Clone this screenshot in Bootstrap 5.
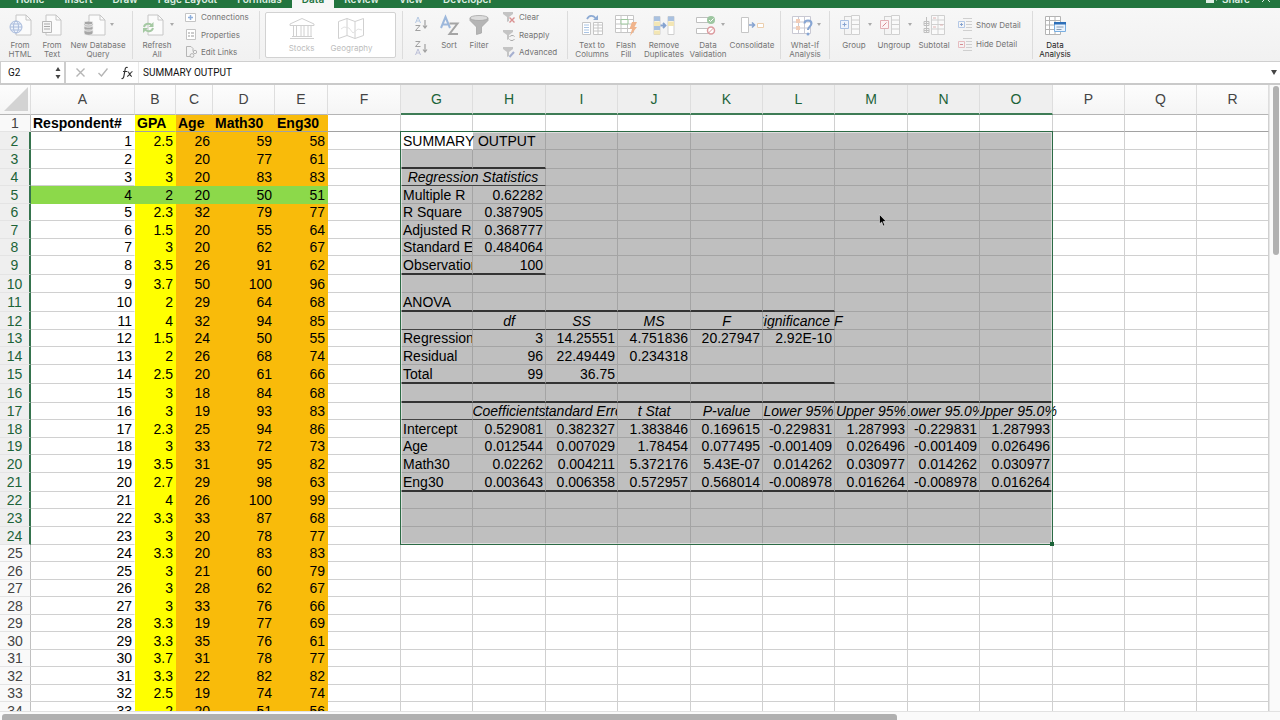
<!DOCTYPE html>
<html lang="en">
<head>
<meta charset="utf-8">
<meta name="viewport" content="width=device-width, initial-scale=1">
<title>Regression workbook</title>
<link href="https://cdn.jsdelivr.net/npm/bootstrap@5.3.0/dist/css/bootstrap.min.css" rel="stylesheet">
<style>
:root { --xl-green: #23753f; --xl-line: #d0d0d0; --xl-sel: #bfbfbf; }
body { font-family: Inter, "Liberation Sans", sans-serif; color: #000; background: #fff; }

/* tab strip, scrolled almost out of view */
.tabstrip { height: 8px; background: var(--xl-green); overflow: hidden; padding-left: 6px; }
.tabstrip .nav-link { font-size: 10px; line-height: 12px; font-weight: 600; color: #dfeee4; padding: 0 10px 3px; }
.tabstrip .nav-link.active { background: #f6f6f6; color: var(--xl-green); }
.tabstrip svg { display: block; }

/* ribbon */
.ribbon { height: 54px; background: linear-gradient(#f7f7f7, #f1f1f1); border-bottom: 1px solid #cfcfcf; padding-left: 4px; overflow: hidden; }
.ribbon .rule { width: 1px; height: 48px; margin: 3px 4px 0; background: #dcdcdc; flex: none; }
.tool { border: 0; background: none; padding: 6px 0 0; flex: none; color: #747474; font-size: 8px; line-height: 9px; display: flex; flex-direction: column; align-items: center; white-space: nowrap; }
.tool svg { flex: none; height: 24px; margin-bottom: 3px; overflow: visible; }
.tool.on { color: #222; }
.w-28 { width: 28px; } .w-32 { width: 32px; } .w-36 { width: 36px; } .w-40 { width: 40px; } .w-48 { width: 48px; } .w-60 { width: 60px; }
.rowtool { border: 0; background: none; padding: 0; height: 12px; display: flex; align-items: center; gap: 4px; color: #747474; font-size: 8px; line-height: 12px; white-space: nowrap; }
.stack { flex: none; padding: 3px 0 3px 8px; display: flex; flex-direction: column; justify-content: space-between; }
.stack.two { justify-content: space-evenly; padding-left: 4px; }
.stack-a { width: 78px; } .stack-b { width: 68px; } .stack-c { width: 74px; }
.gallery { width: 131px; height: 46px; margin: 4px 2px 0 1px; background: #fff; border: 1px solid #d2d2d2; border-radius: 2px; flex: none; gap: 16px; }
.gallery .tool { color: #bdbdbd; padding-top: 4px; }

/* formula bar */
.formula { height: 23px; background: #fff; border-bottom: 2px solid #cacaca; }
.namebox { width: 66px; border: 1px solid #cdcdcd; border-width: 0 2px 0 1px; }
.namebox input, .formula .entry { border: 0; outline: 0; background: none; padding: 0; font-family: Roboto, sans-serif; font-size: 10px; line-height: 14px; color: #111; min-width: 0; }
.namebox input { width: 45px; margin-left: 7px; }
.formula button { border: 0; background: none; padding: 0; display: flex; }
.fxbar { gap: 13px; padding: 0 5px 0 10px; }
.entrybox { border-left: 1px solid #e9e9e9; padding: 0 3px 0 4px; }

/* sheet */
.sheet { position: relative; overflow: hidden; min-width: 0; }
.sheetgrid { table-layout: fixed; width: 100%; border-collapse: separate; border-spacing: 0; font-family: "Liberation Sans", Arial, sans-serif; font-size: 14px; line-height: 16px; }
.sheetgrid th, .sheetgrid td { padding: 0 2px; border: 0 solid var(--xl-line); border-width: 0 1px 1px 0; vertical-align: middle; white-space: nowrap; overflow: hidden; }
.sheetgrid thead th { height: 30px; font-weight: 400; text-align: center; color: #444; background: linear-gradient(#fdfdfd, #f5f5f5); border-bottom-color: #b5b5b5; border-right-color: #dedede; padding: 0 0 1px; }
.sheetgrid thead th.insel { background: #efefef; color: #1c6338; border-bottom: 2px solid #3e7c56; padding: 0; }
.sheetgrid tbody th { font-weight: 400; text-align: center; color: #444; background: #f9f9f9; border-right-color: #c0c0c0; border-bottom-color: #e4e4e4; padding: 0; }
.sheetgrid tbody th.insel { background: #efefef; color: #1c6338; border-right: 2px solid #35734d; border-bottom-color: #e4e4e4; }
.h17 > * { height: 17px; } .h18 > * { height: 18px; } .h19 > * { height: 19px; }
.sheetgrid .num { text-align: right; }
.sheetgrid .mid { text-align: center; font-style: italic; padding: 0; }
.sheetgrid tr.head > td { font-weight: 700; border-bottom-color: #a2a2a2; }
.sheetgrid td.edge { border-right-color: transparent; }
.sheetgrid td.yel { background: #ffff00; border-color: #ffff00; }
.sheetgrid td.org { background: #f9bb0a; border-color: #f9bb0a; }
.sheetgrid td.grn { background: #8cd94a; border-color: #8cd94a; }
.sheetgrid td.sel { background: var(--xl-sel); border-color: #a4a4a4; }
.sheetgrid td.cur { background: #fff; border-right-color: #fff; }
.sheetgrid td.spill { overflow: visible; }
.sheetgrid td.thick { border-bottom: 2px solid #333; }
.sheetgrid td.thin { border-bottom: 1px solid #444; }
.fit { display: flex; justify-content: center; clip-path: inset(0); }
.fit-right { clip-path: inset(0 -16px 0 0); }
.range-box { position: absolute; border: 1px solid #2c6b45; box-shadow: inset 0 0 0 1px #ffffff80; pointer-events: none; }
.range-box i { position: absolute; right: -2px; bottom: -2px; width: 4px; height: 4px; background: #1c6338; }
.pointer { position: absolute; left: 879px; top: 129px; }

.vtrack { width: 11px; background: #fafafa; border-left: 1px solid #e6e6e6; padding: 1px 1px 0 3px; }
.vthumb { width: 6px; height: 27%; border-radius: 3px; background: #b1b1b1; }
.htrack { height: 9px; background: #fafafa; border-top: 1px solid #e2e2e2; padding: 2px 0 0 2px; }
.hthumb { width: 70%; height: 6px; border-radius: 3px 3px 0 0; background: #b0b0b0; }
</style>
</head>
<body class="vh-100 d-flex flex-column overflow-hidden">

<nav class="tabstrip d-flex align-items-end flex-shrink-0" aria-label="Ribbon tabs">
  <a class="nav-link" href="#">Home</a>
  <a class="nav-link" href="#">Insert</a>
  <a class="nav-link" href="#">Draw</a>
  <a class="nav-link" href="#">Page Layout</a>
  <a class="nav-link" href="#">Formulas</a>
  <a class="nav-link active" href="#">Data</a>
  <a class="nav-link" href="#">Review</a>
  <a class="nav-link" href="#">View</a>
  <a class="nav-link" href="#">Developer</a>
  <a class="nav-link ms-auto d-flex align-items-end gap-1" href="#"><svg width="12" height="8" viewBox="0 0 12 8" fill="#dfeee4"><path d="M0 6V3q0-2 4-2t4 2v3zM9 1h3L10.500 4z"/></svg>Share</a>
  <svg class="me-2 flex-shrink-0" width="12" height="8" viewBox="0 0 12 8" fill="none" stroke="#dfeee4"><path d="M2 2l4-4 4 4"/></svg>
</nav>

<div class="ribbon d-flex flex-shrink-0" role="toolbar" aria-label="Data">
  <button class="tool w-32"><svg width="24" viewBox="0 0 24 24" fill="none" stroke="#c6c6c6"><path d="M8 1h10l5 5v15H8z" fill="#fbfbfb"/><path d="M18 1v5h5"/><g stroke="#a9bbdc"><circle cx="8" cy="13" r="6" fill="#eef3fb"/><ellipse cx="8" cy="13" rx="2.500" ry="6"/><path d="M2 13h12M3 10h10M3 16h10"/></g></svg>From<br>HTML</button>
  <button class="tool w-32"><svg width="24" viewBox="0 0 24 24" fill="none" stroke="#c6c6c6"><path d="M6 1h10l5 5v15H6z" fill="#fbfbfb"/><path d="M16 1v5h5"/><path d="M2.500 7.500h9v11h-9z" fill="#f6f6f6" stroke="#b9b9b9"/><path d="M4 10h6M4 12.500h6M4 15h6" stroke="#a9a9a9"/></svg>From<br>Text</button>
  <button class="tool w-60"><svg width="48" viewBox="0 0 48 24" fill="none" stroke="#c6c6c6"><path d="M15 1h11l5 5v15H15z" fill="#fbfbfb"/><path d="M26 1v5h5"/><g stroke="#f0f0f0" stroke-width=".8" fill="#a6a6a6"><path d="M10 16v3c0 3 9 3 9 0v-3zM10 12v3c0 3 9 3 9 0v-3zM10 9v2c0 3 9 3 9 0V9z"/><ellipse cx="14.500" cy="9" rx="4.500" ry="1.900"/></g><path d="M36 9h4l-2 3z" fill="#aaa" stroke="none"/></svg>New Database<br>Query</button>
  <div class="rule"></div>
  <button class="tool w-40"><svg width="32" viewBox="0 0 32 24" fill="none" stroke="#c6c6c6"><path d="M7 1h10l5 5v15H7z" fill="#fbfbfb"/><path d="M17 1v5h5"/><g stroke="#a5c9a3" stroke-width="2"><path d="M3 13c1-4 6-4 8-1.500M12 14c-1 4-6 4-8 1.500"/></g><path d="M12.500 8v5h-5zM2 19v-5h5z" fill="#a5c9a3" stroke="none"/><path d="M29 9h4l-2 3z" fill="#aaa" stroke="none"/></svg>Refresh<br>All</button>
  <div class="stack stack-a">
    <button class="rowtool"><svg width="12" height="11" viewBox="0 0 12 11" fill="none" stroke="#c4c4c4"><path d="M.5 1.500h10v8H.5z" fill="#fff"/><path d="M5.500 3v5M3 5.500h5" stroke="#8fb0dc" stroke-width="1.500"/></svg>Connections</button>
    <button class="rowtool"><svg width="12" height="11" viewBox="0 0 12 11" fill="none" stroke="#c4c4c4"><path d="M1.500.5h9v10h-9z" fill="#fff"/><path d="M3 4h2M6 4h3M3 7h2M6 7h3" stroke="#999"/></svg>Properties</button>
    <button class="rowtool"><svg width="12" height="12" viewBox="0 0 12 12" fill="none" stroke="#b5b5b5"><path d="M1.500.5H6l2 2v3M5 10.500H1.500V.5"/><circle cx="10" cy="6" r="1.700"/><circle cx="7" cy="9.500" r="1.900"/></svg>Edit Links</button>
  </div>
  <div class="rule"></div>
  <div class="gallery d-flex justify-content-center">
    <button class="tool"><svg width="26" viewBox="0 0 26 24" fill="none" stroke="#d0d0d0"><path d="M1 8.500V7l12-5.500L25 7v1.500zM3 19.500h20M1 21.500h24M4.500 9v10M7.500 9v10M12 9v10M15 9v10M19 9v10M22 9v10"/></svg>Stocks</button>
    <button class="tool"><svg width="26" viewBox="0 0 26 24" fill="none" stroke="#d0d0d0"><path d="M.5 4.500L9 1.500l8 3 8.500-3v17l-8.500 3-8-3-8.500 3zM9 1.500v17M17 4.500v17"/><path d="M3 12l3-2 5 1 4 5 5-4 4 1" stroke="#e2e2e2"/></svg>Geography</button>
  </div>
  <div class="rule"></div>
  <div class="w-28 flex-shrink-0">
    <button class="tool w-28 pt-2" aria-label="Sort ascending"><svg class="m-0" style="height:16px" width="14" viewBox="0 0 14 16" fill="none" stroke="#a0a0a0"><path d="M1.500 7L4 1l2.500 6M2.500 5h3" stroke="#b5c8e2"/><path d="M1.500 9.500h4.500l-4.500 5h5"/><path d="M11 4v8M9 9.500l2 2.500 2-2.500" stroke-width="1.200"/></svg></button>
    <button class="tool w-28 pt-2" aria-label="Sort descending"><svg class="m-0" style="height:16px" width="14" viewBox="0 0 14 16" fill="none" stroke="#a0a0a0"><path d="M1.500 1.500h4.500L1.500 6.500h5"/><path d="M1.500 15L4 9l2.500 6M2.500 13h3" stroke="#bcc0d8"/><path d="M11 4v8M9 9.500l2 2.500 2-2.500" stroke-width="1.200"/></svg></button>
  </div>
  <button class="tool w-28"><svg width="20" viewBox="0 0 20 24" fill="none" stroke-width="2"><path d="M2 14L6.500 3l4.500 11M3.500 10.500h6" stroke="#9db8dc"/><path d="M10.500 9.500h8l-8 10.500h8.500" stroke="#a5a5a5"/></svg>Sort</button>
  <button class="tool w-32"><svg width="20" viewBox="0 0 20 24" fill="#b5b5b5" stroke="#a5a5a5" stroke-width=".8"><path d="M1 4v2.500l6.500 6.500v7.500l5-1.500V13L19 6.500V4z"/><ellipse cx="10" cy="4" rx="9" ry="2.500" fill="#dcdcdc"/></svg>Filter</button>
  <div class="stack stack-b">
    <button class="rowtool"><svg width="12" height="12" viewBox="0 0 12 12"><path d="M0 1h10v2L6 6v4l-2 1V6L0 3z" fill="#c4c4c4"/><path d="M6.500 6.500l5 5M11.500 6.500l-5 5" stroke="#d99090" stroke-width="1.400"/></svg>Clear</button>
    <button class="rowtool"><svg width="12" height="12" viewBox="0 0 12 12"><path d="M0 1h10v2L6 6v4l-2 1V6L0 3z" fill="#c4c4c4"/><path d="M6.500 8c1-2 4-2 5-.5M11.500 10c-1 2-4 2-5 .5" stroke="#aaa" fill="none"/></svg>Reapply</button>
    <button class="rowtool"><svg width="12" height="12" viewBox="0 0 12 12"><path d="M0 1h10v2L6 6v4l-2 1V6L0 3z" fill="#c4c4c4"/><path d="M6.500 11l4.500-5" stroke="#a5afd0" stroke-width="2"/></svg>Advanced</button>
  </div>
  <div class="rule"></div>
  <button class="tool w-40"><svg width="24" viewBox="0 0 24 24" fill="#fff" stroke="#c6c6c6"><path d="M2.500 8.500h8v12h-8zM13.500 8.500h9v12h-9z"/><path d="M4 11h5M4 13.500h5M4 16h5M4 18.500h5" stroke="#a9c4e4"/><path d="M13.500 11h9M13.500 14h9M13.500 17h9M18 9v11"/><path d="M7 5c2-4 6-4 8.500-1" stroke="#8eabd4" stroke-width="1.800" fill="none"/><path d="M18 1v5h-5z" fill="#8eabd4" stroke="none"/></svg>Text to<br>Columns</button>
  <button class="tool w-28"><svg width="24" viewBox="0 0 24 24" fill="#fff" stroke="#c6c6c6"><path d="M1.500 1.500h18v17h-18zM1.500 5.500h18M1.500 10h18M1.500 14.500h18M7 1.500v17M13.500 1.500v17"/><path d="M7 5.500h7v4.500H7z" stroke="#9cc79c"/><path d="M18 8h5l-2.500 5h2.500l-7 9 2-7h-2.500z" fill="#f0b48c" stroke="none"/></svg>Flash<br>Fill</button>
  <button class="tool w-48"><svg width="24" viewBox="0 0 24 24" fill="#fff" stroke="#cfcfcf"><path d="M2 2.500h6v18H2zM16 2.500h6v18h-6z"/><path d="M2 2.500h6V7H2zM2 12h6v4H2zM16 2.500h6V7h-6z" fill="#a9c1e0" stroke="none"/><path d="M2 7.500h6V12H2zM2 16.500h6v4H2zM16 7.500h6V12h-6z" fill="#f3e6b4" stroke="none"/><path d="M8.500 11.500h5M11 9l2.500 2.500L11 14" stroke="#86a3d0" stroke-width="1.800" fill="none"/></svg>Remove<br>Duplicates</button>
  <button class="tool w-40"><svg width="40" viewBox="0 0 40 24" fill="#fff" stroke="#c0c0c0"><path d="M8.500 3.500h14v5h-14zM8.500 14.500h14v5h-14z"/><circle cx="23" cy="6" r="4" fill="#9dc6a0" stroke="none"/><path d="M21 6l1.500 1.500L25.500 4.500" stroke="#fff" fill="none"/><circle cx="23" cy="16.500" r="3.500" stroke="#dc9a9e" stroke-width="1.500"/><path d="M20.500 19l5-5" stroke="#dc9a9e"/><path d="M33 9h4l-2 3z" fill="#aaa" stroke="none"/></svg>Data<br>Validation</button>
  <button class="tool w-48"><svg width="24" viewBox="0 0 24 24" fill="#fff" stroke="#c6c6c6"><path d="M1.500 3.500h7v15h-7z"/><path d="M17.500 9.500h6v4h-6z" stroke="#eccfae"/><path d="M9 11h5M12 8.500l2.500 2.500L12 13.500" stroke="#86a3d0" stroke-width="1.600" fill="none"/></svg>Consolidate</button>
  <div class="rule"></div>
  <button class="tool w-40"><svg width="32" viewBox="0 0 32 24" fill="#fff" stroke="#c9c9d3"><path d="M3.500 2.500h18v17h-18zM3.500 8h18M3.500 14h18M9.500 2.500v17M15.500 2.500v17"/><path d="M7 5h4v4H7zM7 12h4v4H7z" fill="#f2cdb8" stroke="none"/><path d="M15.500 9.500c0-4 7-4 7 0 0 3-3.500 3-3.500 6.500" stroke="#87a6d4" stroke-width="2" fill="none"/><circle cx="19" cy="20" r="1.500" fill="#87a6d4" stroke="none"/><path d="M28 9h4l-2 3z" fill="#aaa" stroke="none"/></svg>What-If<br>Analysis</button>
  <div class="rule"></div>
  <button class="tool w-40"><svg width="32" viewBox="0 0 32 24" fill="#fafafa" stroke="#d0d0d0"><path d="M6 2.500h7M6 20.500h7M6.500 2v18"/><path d="M13.500 1.500h8v19h-8zM13.500 6h8M13.500 10.500h8M13.500 15h8"/><path d="M2.500 6.500h8v8h-8z" fill="#eef3fb" stroke="#a9c0e2"/><path d="M6.500 8.500v4M4.500 10.500h4" stroke="#86a3d0"/><path d="M30 9h4l-2 3z" fill="#aaa" stroke="none"/></svg>Group</button>
  <button class="tool w-40"><svg width="32" viewBox="0 0 32 24" fill="#fafafa" stroke="#d0d0d0"><path d="M6 2.500h7M6 20.500h7M6.500 2v18"/><path d="M13.500 1.500h8v19h-8zM13.500 6h8M13.500 10.500h8M13.500 15h8"/><path d="M2.500 6.500h8v8h-8z" fill="#fdf4f4" stroke="#e2b0b4"/><path d="M4.500 12.500l4-4" stroke="#d58a90"/><path d="M30 9h4l-2 3z" fill="#aaa" stroke="none"/></svg>Ungroup</button>
  <button class="tool w-40"><svg width="24" viewBox="0 0 24 24" fill="#fafafa" stroke="#d0d0d0"><path d="M9.500 1.500h13v19h-13zM9.500 6h13M9.500 10.500h13M9.500 15h13M16 1.500v19"/><path d="M11 4h3M11 13h3M18 11h3" stroke="#e0b4b4"/><path d="M2 7.500h5v4H2zM2 14.500h5v4H2zM4.500 3v16M2 9.500h5M2 16.500h5" fill="none" stroke="#c0c0c0"/></svg>Subtotal</button>
  <div class="stack stack-c two">
    <button class="rowtool"><svg width="14" height="13" viewBox="0 0 14 13" fill="none" stroke="#cfcfcf"><path d="M5 .5h9M8 3.500h6M8 6.500h6M8 9.500h6M5 12.500h9"/><path d="M.5 3.500h6v6h-6z" stroke="#b4c8e6"/><path d="M3.500 5v3M2 6.500h3" stroke="#86a3d0"/></svg>Show Detail</button>
    <button class="rowtool"><svg width="14" height="13" viewBox="0 0 14 13" fill="none" stroke="#cfcfcf"><path d="M5 .5h9M8 3.500h6M8 6.500h6M8 9.500h6M5 12.500h9"/><path d="M.5 3.500h6v6h-6z" stroke="#e6bcc0"/><path d="M2 6.500h3" stroke="#d58a90"/></svg>Hide Detail</button>
  </div>
  <div class="rule"></div>
  <button class="tool on w-36"><svg width="24" viewBox="0 0 24 24" fill="#fff" stroke="#b4b4b4"><path d="M2.500 2.500h15v18h-15zM2.500 6.500h15M2.500 11h15M2.500 15.500h15M6.500 2.500v18M12 2.500v18"/><path d="M11.500 8.500h11v9h-11z" fill="#eaf3fd" stroke="#79aee0"/><path d="M11 8h12v2.500H11z" fill="#2e6fb8" stroke="none"/><path d="M13.500 13h7M13.500 15.500h5" stroke="#8b9eb5"/></svg>Data<br>Analysis</button>
</div>

<div class="formula d-flex flex-shrink-0">
  <div class="namebox d-flex align-items-center">
    <input type="text" value="G2" aria-label="Name box">
    <button aria-label="Cell list"><svg width="10" height="16" viewBox="0 0 10 16" fill="#444"><path d="M2.500 6h5L5 2zM2.500 10h5L5 14z"/></svg></button>
  </div>
  <div class="fxbar d-flex align-items-center">
    <button aria-label="Cancel"><svg width="9" height="9" viewBox="0 0 9 9" stroke="#b5b5b5" stroke-width="1.400"><path d="M.5.5l8 8M8.500.5l-8 8"/></svg></button>
    <button aria-label="Enter"><svg width="10" height="9" viewBox="0 0 10 9" stroke="#b5b5b5" stroke-width="1.400" fill="none"><path d="M.5 5L3.500 8l6-7.500"/></svg></button>
    <button aria-label="Insert function"><svg width="12" height="14" viewBox="0 0 12 14" fill="none" stroke="#333" stroke-width="1.200"><path d="M.5 12.500c2 .5 2.200-1 2.800-4.500l.8-4.500c.3-1.800 1-2.500 2.600-2M2 5.500h4M6.500 5.500c2 0 2 5 4.500 5M11.500 5.500c-2 0-3 5-5.500 5"/></svg></button>
  </div>
  <div class="entrybox d-flex flex-grow-1 align-items-center">
    <input class="entry flex-grow-1" type="text" value="SUMMARY OUTPUT" aria-label="Formula">
    <button aria-label="Expand formula bar"><svg width="6" height="5" viewBox="0 0 6 5" fill="#444"><path d="M0 0h6L3 5z"/></svg></button>
  </div>
</div>

<main class="d-flex flex-grow-1" style="min-height:0">
  <div class="sheet flex-grow-1" id="sheet">
    <table class="sheetgrid">
      <colgroup id="cols"></colgroup>
      <thead><tr id="letters"></tr></thead>
      <tbody id="rows"></tbody>
    </table>
    <div class="range-box" id="range"><i></i></div>
    <svg class="pointer" width="8" height="13" viewBox="0 0 8 13"><path d="M.5.5v9.500l2.200-2 1.500 4 1.600-.7-1.600-3.800h3z" fill="#000" stroke="#eee" stroke-width=".6"/></svg>
  </div>
  <div class="vtrack flex-shrink-0"><div class="vthumb"></div></div>
</main>
<div class="htrack flex-shrink-0"><div class="hthumb"></div></div>

<script>
const letters = 'ABCDEFGHIJKLMNOPQR'.split('');
const widths = [104, 41, 37, 62, 53, 73, 72, 73, 72, 73, 72, 72, 73, 72, 73, 72, 72];
const heights = [17,18,19,17,18,17,18,17,19,18,19,18,17,18,19,19,17,18,17,18,19,17,18,18,17,18,17,18,17,18,17,18,17,18];

const survey = [
  [1,2.5,26,59,58],[2,3,20,77,61],[3,3,20,83,83],[4,2,20,50,51],[5,2.3,32,79,77],[6,1.5,20,55,64],
  [7,3,20,62,67],[8,3.5,26,91,62],[9,3.7,50,100,96],[10,2,29,64,68],[11,4,32,94,85],[12,1.5,24,50,55],
  [13,2,26,68,74],[14,2.5,20,61,66],[15,3,18,84,68],[16,3,19,93,83],[17,2.3,25,94,86],[18,3,33,72,73],
  [19,3.5,31,95,82],[20,2.7,29,98,63],[21,4,26,100,99],[22,3.3,33,87,68],[23,3,20,78,77],[24,3.3,20,83,83],
  [25,3,21,60,79],[26,3,28,62,67],[27,3,33,76,66],[28,3.3,19,77,69],[29,3.3,35,76,61],[30,3.7,31,78,77],
  [31,3.3,22,82,82],[32,2.5,19,74,74],[33,2,20,51,56]
];

/* regression output: row number -> values from column G on */
const output = {
  2: ['SUMMARY OUTPUT'],
  5: ['Multiple R', '0.62282'], 6: ['R Square', '0.387905'], 7: ['Adjusted R Square', '0.368777'],
  8: ['Standard Error', '0.484064'], 9: ['Observations', '100'],
  11: ['ANOVA'],
  12: ['', 'df', 'SS', 'MS', 'F', 'Significance F'],
  13: ['Regression', '3', '14.25551', '4.751836', '20.27947', '2.92E-10'],
  14: ['Residual', '96', '22.49449', '0.234318'], 15: ['Total', '99', '36.75'],
  17: ['', 'Coefficients', 'Standard Error', 't Stat', 'P-value', 'Lower 95%', 'Upper 95%', 'Lower 95.0%', 'Upper 95.0%'],
  18: ['Intercept', '0.529081', '0.382327', '1.383846', '0.169615', '-0.229831', '1.287993', '-0.229831', '1.287993'],
  19: ['Age', '0.012544', '0.007029', '1.78454', '0.077495', '-0.001409', '0.026496', '-0.001409', '0.026496'],
  20: ['Math30', '0.02262', '0.004211', '5.372176', '5.43E-07', '0.014262', '0.030977', '0.014262', '0.030977'],
  21: ['Eng30', '0.003643', '0.006358', '0.572957', '0.568014', '-0.008978', '0.016264', '-0.008978', '0.016264']
};
/* ruled lines under a row: [style, number of columns from G] */
const rules = { 3: ['thick', 2], 4: ['thin', 2], 9: ['thick', 2], 11: ['thick', 6], 12: ['thin', 6],
                15: ['thick', 6], 16: ['thick', 9], 17: ['thin', 9], 21: ['thick', 9] };

document.getElementById('cols').innerHTML =
  '<col style="width:31px">' + widths.map(w => `<col style="width:${w}px">`).join('') + '<col>';

document.getElementById('letters').innerHTML =
  '<th><svg class="d-block ms-1" width="24" height="24" viewBox="0 0 24 24"><path d="M24 0v24H0z" fill="#d3d3d3"/></svg></th>' +
  letters.map((l, i) => `<th scope="col" class="${i > 5 && i < 15 ? 'insel' : ''}">${l}</th>`).join('');

const fills = ['', 'yel', 'org', 'org', 'org'];
const titles = ['Respondent#', 'GPA', 'Age', 'Math30', 'Eng30'];
let html = '';
heights.forEach((h, k) => {
  const r = k + 1;
  html += `<tr class="h${h}${r === 1 ? ' head' : ''}"><th scope="row" class="${r > 1 && r < 25 ? 'insel' : ''}">${r}</th>`;
  for (let c = 0; c < 18; c++) {
    let cls = [], text = '', span = '';
    if (c < 5) {
      cls.push(r === 5 ? 'grn' : fills[c] || 'edge');
      text = r === 1 ? titles[c] : survey[r - 2][c];
      if (r > 1) cls.push('num');
    } else if (c > 5 && c < 15 && r > 1 && r < 25) {
      const g = c - 6, v = (output[r] || [])[g] || '';
      cls.push('sel');
      if (rules[r] && g < rules[r][1]) cls.push(rules[r][0]);
      text = v;
      if (r === 2 && g === 0) cls.push('cur', 'spill');
      if (r === 4 && g === 0) { cls.push('mid'); text = 'Regression Statistics'; span = ' colspan="2"'; c++; }
      else if (r === 12 || r === 17) {
        cls.push('mid');
        if (v) {
          const over = v === 'Significance F' || v === 'Upper 95.0%';
          if (over) cls.push('spill');
          text = `<div class="fit${over ? ' fit-right' : ''}"><span>${v}</span></div>`;
        }
      } else if (g > 0) cls.push('num');
    }
    html += `<td${span} class="${cls.join(' ')}">${text}</td>`;
  }
  html += '</tr>';
});
document.getElementById('rows').innerHTML = html;

/* outline of the selected range G2:O24 */
function outline() {
  const sheet = document.getElementById('sheet').getBoundingClientRect();
  const rows = document.getElementById('rows').rows;
  const a = rows[1].cells[7].getBoundingClientRect(), b = rows[23].cells[15].getBoundingClientRect();
  const s = document.getElementById('range').style;
  s.left = a.left - sheet.left - 1 + 'px';
  s.top = a.top - sheet.top - 1 + 'px';
  s.width = b.right - a.left + 1 + 'px';
  s.height = b.bottom - a.top + 1 + 'px';
}
outline();
addEventListener('resize', outline);
</script>
<script src="https://cdn.jsdelivr.net/npm/bootstrap@5.3.0/dist/js/bootstrap.bundle.min.js"></script>
</body>
</html>
